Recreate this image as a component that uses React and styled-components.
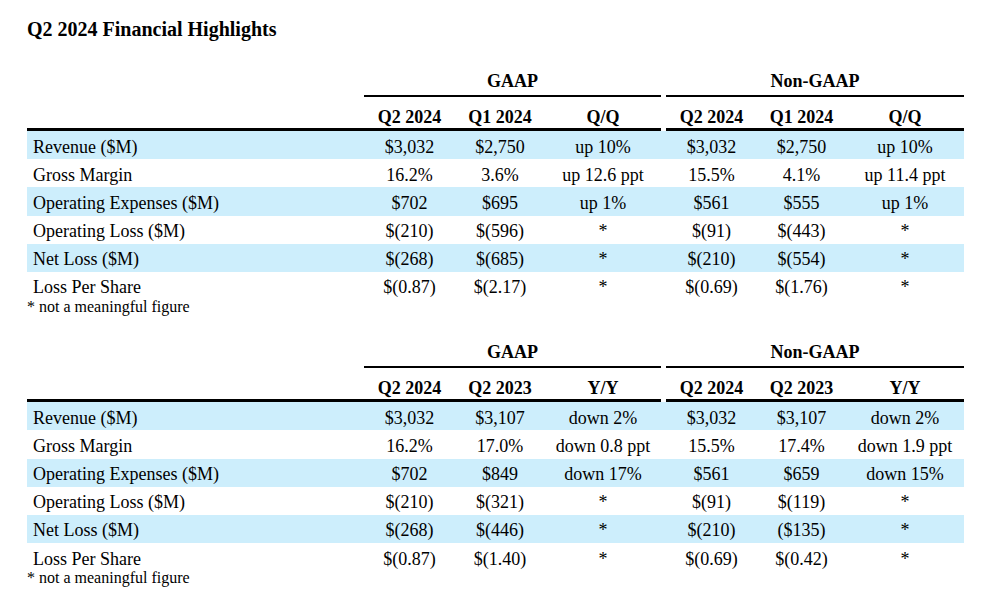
import React from 'react';
import styled, { createGlobalStyle } from 'styled-components';

const COLS = '337px 91px 90px 116px 5px 91px 89px 118px';

const tables = [
  {
    heads: ['Q2 2024', 'Q1 2024', 'Q/Q'],
    rows: [
      ['Revenue ($M)', '$3,032', '$2,750', 'up 10%', '$3,032', '$2,750', 'up 10%'],
      ['Gross Margin', '16.2%', '3.6%', 'up 12.6 ppt', '15.5%', '4.1%', 'up 11.4 ppt'],
      ['Operating Expenses ($M)', '$702', '$695', 'up 1%', '$561', '$555', 'up 1%'],
      ['Operating Loss ($M)', '$(210)', '$(596)', '*', '$(91)', '$(443)', '*'],
      ['Net Loss ($M)', '$(268)', '$(685)', '*', '$(210)', '$(554)', '*'],
      ['Loss Per Share', '$(0.87)', '$(2.17)', '*', '$(0.69)', '$(1.76)', '*'],
    ],
  },
  {
    heads: ['Q2 2024', 'Q2 2023', 'Y/Y'],
    rows: [
      ['Revenue ($M)', '$3,032', '$3,107', 'down 2%', '$3,032', '$3,107', 'down 2%'],
      ['Gross Margin', '16.2%', '17.0%', 'down 0.8 ppt', '15.5%', '17.4%', 'down 1.9 ppt'],
      ['Operating Expenses ($M)', '$702', '$849', 'down 17%', '$561', '$659', 'down 15%'],
      ['Operating Loss ($M)', '$(210)', '$(321)', '*', '$(91)', '$(119)', '*'],
      ['Net Loss ($M)', '$(268)', '$(446)', '*', '$(210)', '($135)', '*'],
      ['Loss Per Share', '$(0.87)', '$(1.40)', '*', '$(0.69)', '$(0.42)', '*'],
    ],
  },
];

function Table({ heads, rows }) {
  return (
    <Section>
      <GroupRow>
        <div />
        <GroupTitle>GAAP</GroupTitle>
        <div />
        <GroupTitle>Non-GAAP</GroupTitle>
      </GroupRow>
      <HeadRow>
        <HeadCell />
        {heads.map((h, i) => <HeadCell key={'g' + i}>{h}</HeadCell>)}
        <Gap />
        {heads.map((h, i) => <HeadCell key={'n' + i}>{h}</HeadCell>)}
      </HeadRow>
      {rows.map((r, i) => (
        <DataRow key={i} $shaded={i % 2 === 0}>
          <LabelCell>{r[0]}</LabelCell>
          <Cell>{r[1]}</Cell>
          <Cell>{r[2]}</Cell>
          <Cell>{r[3]}</Cell>
          <div />
          <Cell>{r[4]}</Cell>
          <Cell>{r[5]}</Cell>
          <Cell>{r[6]}</Cell>
        </DataRow>
      ))}
      <Note>* not a meaningful figure</Note>
    </Section>
  );
}

export default function App() {
  return (
    <Page>
      <GlobalStyle />
      <Title>Q2 2024 Financial Highlights</Title>
      {tables.map((t, i) => <Table key={i} {...t} />)}
    </Page>
  );
}

const GlobalStyle = createGlobalStyle`
  body {
    margin: 0;
    background: #ffffff;
  }
`;

const Page = styled.div`
  width: 990px;
  height: 610px;
  box-sizing: border-box;
  padding: 18px 0 0 27px;
  background: #ffffff;
  color: #000000;
  font-family: "Liberation Serif", "Times New Roman", serif;
  font-size: 18px;
  overflow: hidden;
`;

const Title = styled.h1`
  margin: 0;
  font-size: 20px;
  font-weight: bold;
  line-height: 22px;
`;

const Section = styled.div`
  margin-top: 31px;

  & + & {
    margin-top: 28px;
  }
`;

const Grid = styled.div`
  display: grid;
  width: 937px;
  grid-template-columns: ${COLS};
`;

const GroupRow = styled(Grid)``;

const GroupTitle = styled.div`
  grid-column: span 3;
  text-align: center;
  font-weight: bold;
  line-height: 20px;
  padding-bottom: 4px;
  border-bottom: 2px solid #000;
`;

const HeadRow = styled(Grid)``;

const HeadCell = styled.div`
  text-align: center;
  font-weight: bold;
  line-height: 20px;
  padding: 10px 0 1px;
  border-bottom: 3px solid #000;
`;

const Gap = styled.div``;

const DataRow = styled(Grid)`
  height: 28.2px;
  background: ${(p) => (p.$shaded ? '#cdeefc' : 'transparent')};
`;

const Cell = styled.div`
  text-align: center;
  line-height: 26px;
  padding-top: 2.5px;
  white-space: nowrap;
`;

const LabelCell = styled(Cell)`
  text-align: left;
  padding-left: 6px;
`;

const Note = styled.div`
  font-size: 16px;
  line-height: 14px;
  height: 14px;
`;
